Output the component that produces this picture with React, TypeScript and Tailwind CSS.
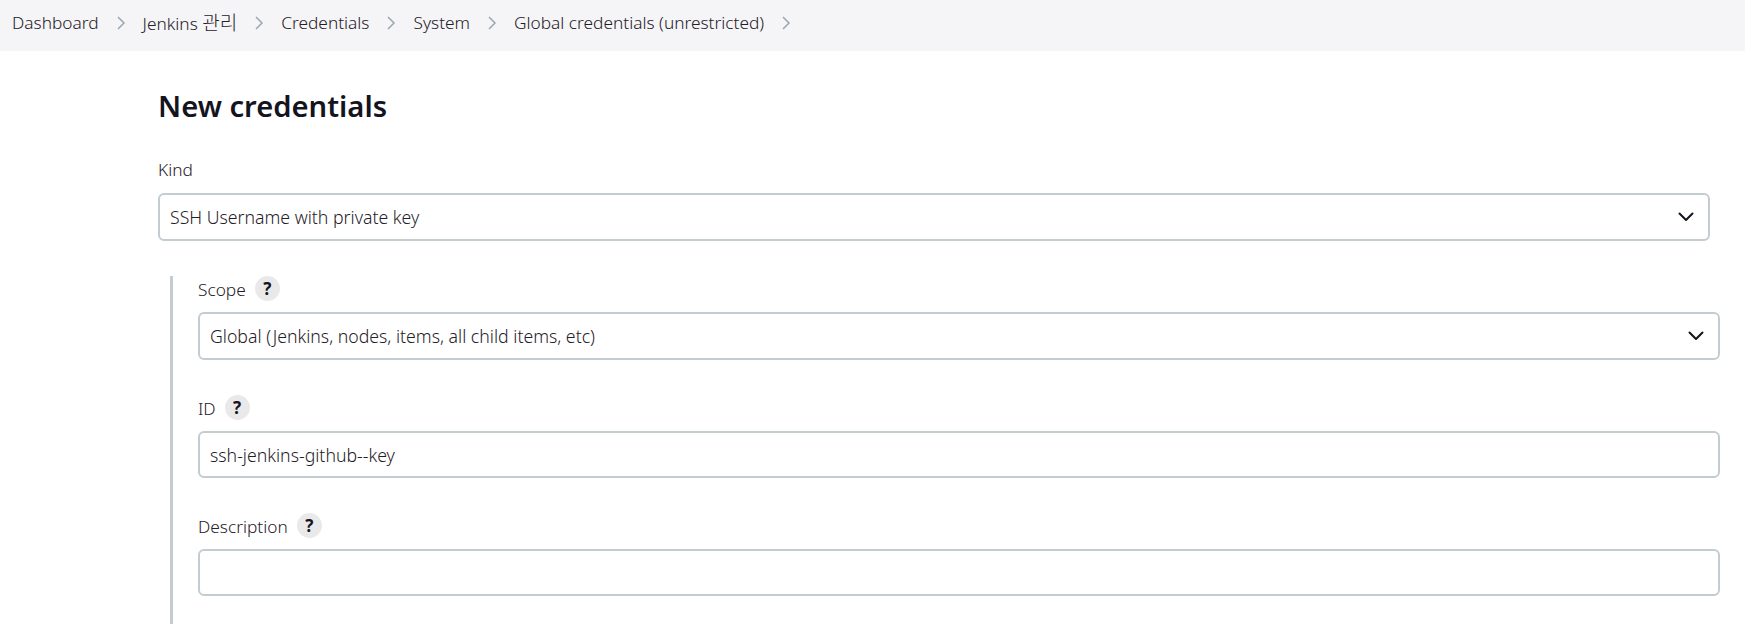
import React from 'react';

const crumbs: React.ReactNode[] = [
  'Dashboard',
  <>
    Jenkins <span className="text-[19px]">관리</span>
  </>,
  'Credentials',
  'System',
  'Global credentials (unrestricted)',
];

const fieldClass =
  'block w-full rounded-[6px] border-2 border-[#c3ccd1] bg-white px-[10px] text-[17.7px] font-light text-[#1f2028] outline-none appearance-none';

const Help = () => (
  <span className="ml-[9px] flex h-[25px] w-[25px] items-center justify-center rounded-full bg-[#e9e9ea] text-[17px] font-bold text-[#14141f]">
    ?
  </span>
);

const Label: React.FC<{ text: string }> = ({ text }) => (
  <div className="mb-[11px] flex h-[25px] items-center text-[17.3px] font-light text-[#1f2028]">
    <span className="pt-[2px]">{text}</span>
    <Help />
  </div>
);

const Select: React.FC<{ value: string }> = ({ value }) => (
  <div className="relative">
    <select className={`${fieldClass} h-[48px] pt-[1px]`} defaultValue={value}>
      <option>{value}</option>
    </select>
    <svg
      className="pointer-events-none absolute right-[16px] top-[17px] h-[14px] w-[16px]"
      viewBox="0 0 16 14"
      fill="none"
      stroke="#14141f"
      strokeWidth="2"
      strokeLinecap="round"
      strokeLinejoin="round"
    >
      <path d="M1.5 3.5 8 10l6.5-6.5" />
    </svg>
  </div>
);

export default function App() {
  return (
    <div className="h-[624px] overflow-hidden bg-white font-['Noto_Sans','Noto_Sans_CJK_KR',sans-serif]">
      <nav className="flex h-[51px] items-center bg-[#f5f5f7] pb-[5px] pl-[12px] text-[17.3px] font-light text-[#1f2028]">
        {crumbs.map((c, i) => (
          <React.Fragment key={i}>
            <span>{c}</span>
            <svg className="mx-[14px] h-[14px] w-[16px]" viewBox="0 0 16 14" fill="none" stroke="#9ba7af" strokeWidth="1.5">
              <path d="M5 1l6 6-6 6" />
            </svg>
          </React.Fragment>
        ))}
      </nav>
      <main className="pl-[158px] pr-[25px]">
        <h1 className="mt-[34px] text-[29.2px] leading-[42px] font-semibold text-[#14141f]">New credentials</h1>
        <div className="mt-[30px] h-[25px] text-[17.3px] leading-[25px] font-light text-[#1f2028]">Kind</div>
        <div className="mt-[11px] mr-[10px]">
          <Select value="SSH Username with private key" />
        </div>
        <div className="mt-[35px] ml-[12px] border-l-[3px] border-[#c3ccd1] pb-[40px] pl-[25px]">
          <Label text="Scope" />
          <Select value="Global (Jenkins, nodes, items, all child items, etc)" />
          <div className="mt-[35px]">
            <Label text="ID" />
            <input className={`${fieldClass} h-[47px]`} defaultValue="ssh-jenkins-github--key" />
          </div>
          <div className="mt-[35px]">
            <Label text="Description" />
            <input className={`${fieldClass} h-[47px]`} />
          </div>
        </div>
      </main>
    </div>
  );
}
